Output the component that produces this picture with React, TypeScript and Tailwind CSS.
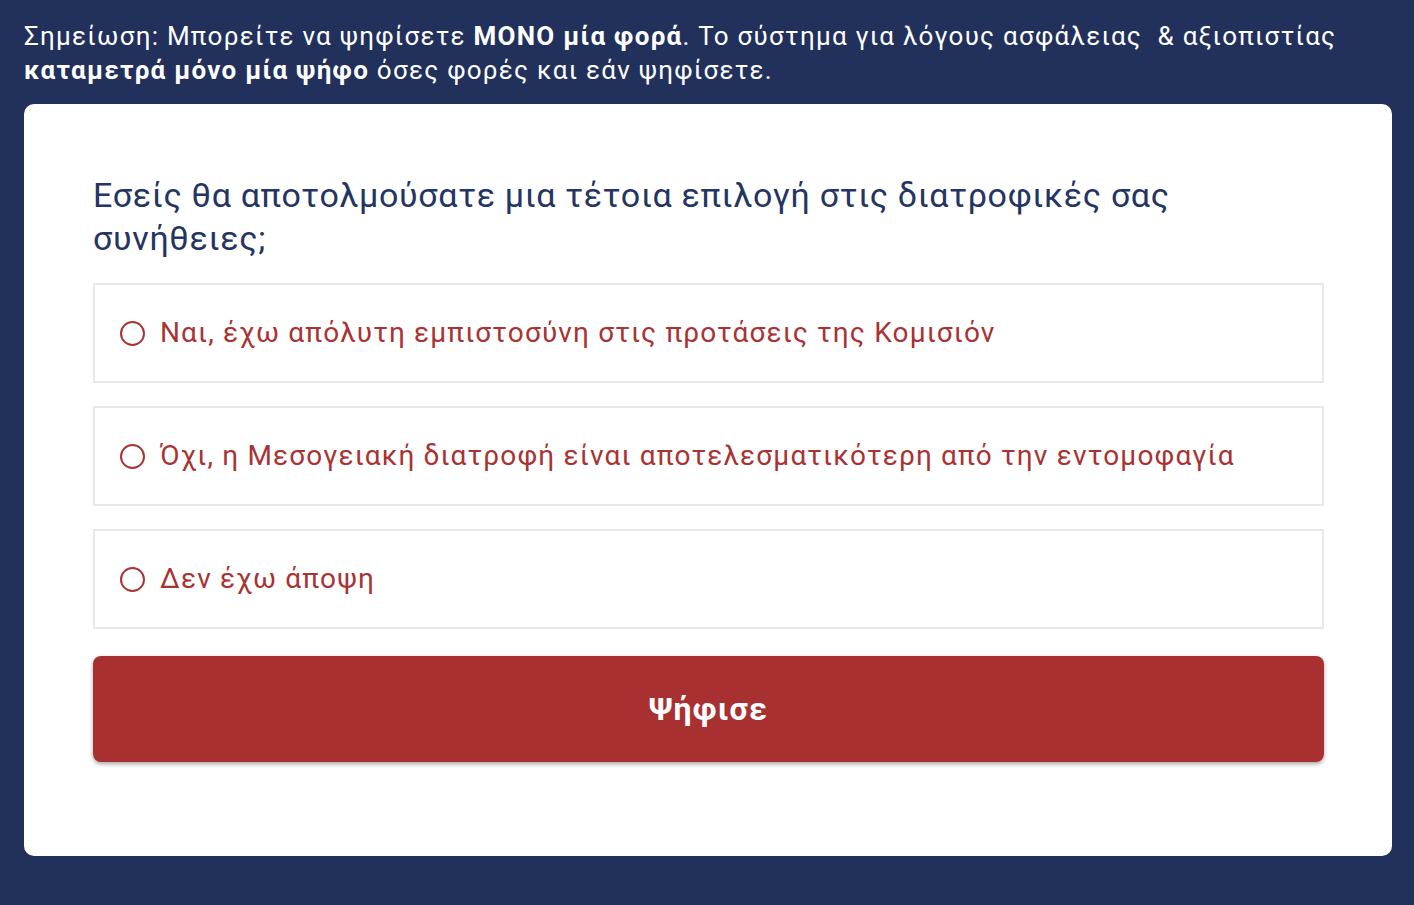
import React from "react";

const options = [
  "Ναι, έχω απόλυτη εμπιστοσύνη στις προτάσεις της Κομισιόν",
  "Όχι, η Μεσογειακή διατροφή είναι αποτελεσματικότερη από την εντομοφαγία",
  "Δεν έχω άποψη",
];

export default function App() {
  return (
    <div className="min-h-[905px] w-full bg-[#22305c] pl-6 pr-[22px] pt-[19px] pb-12 font-['Roboto',sans-serif]">
      <p className="pr-6 text-[26px] leading-[34px] tracking-[1.25px] text-white">
        Σημείωση: Μπορείτε να ψηφίσετε <b className="font-bold">ΜΟΝΟ μία φορά</b>. Το σύστημα για λόγους ασφάλειας&nbsp; &amp; αξιοπιστίας{" "}
        <b className="font-bold">καταμετρά μόνο μία ψήφο</b> όσες φορές και εάν ψηφίσετε.
      </p>
      <div className="mt-[17px] rounded-[10px] bg-white pl-[69px] pr-[68px] pt-[70px] pb-[94px]">
        <h2 className="text-[34px] leading-[43px] tracking-[0.7px] text-[#243463]">
          Εσείς θα αποτολμούσατε μια τέτοια επιλογή στις διατροφικές σας συνήθειες;
        </h2>
        <div className="mt-[23px] flex flex-col gap-[23px]">
          {options.map((o) => (
            <label
              key={o}
              className="flex h-[100px] items-center gap-[15px] border-2 border-[#e8e8e8] pl-[25px] text-[28px] tracking-[1.15px] text-[#a93232]"
            >
              <span className="h-[25px] w-[25px] shrink-0 rounded-full border-2 border-[#a93232]" />
              <span>{o}</span>
            </label>
          ))}
        </div>
        <button className="mt-[27px] flex h-[106px] w-full items-center justify-center rounded-lg bg-[#a93030] text-[32px] font-bold tracking-[1.2px] text-white shadow-[0_2px_4px_rgba(0,0,0,0.35)]">
          Ψήφισε
        </button>
      </div>
    </div>
  );
}
